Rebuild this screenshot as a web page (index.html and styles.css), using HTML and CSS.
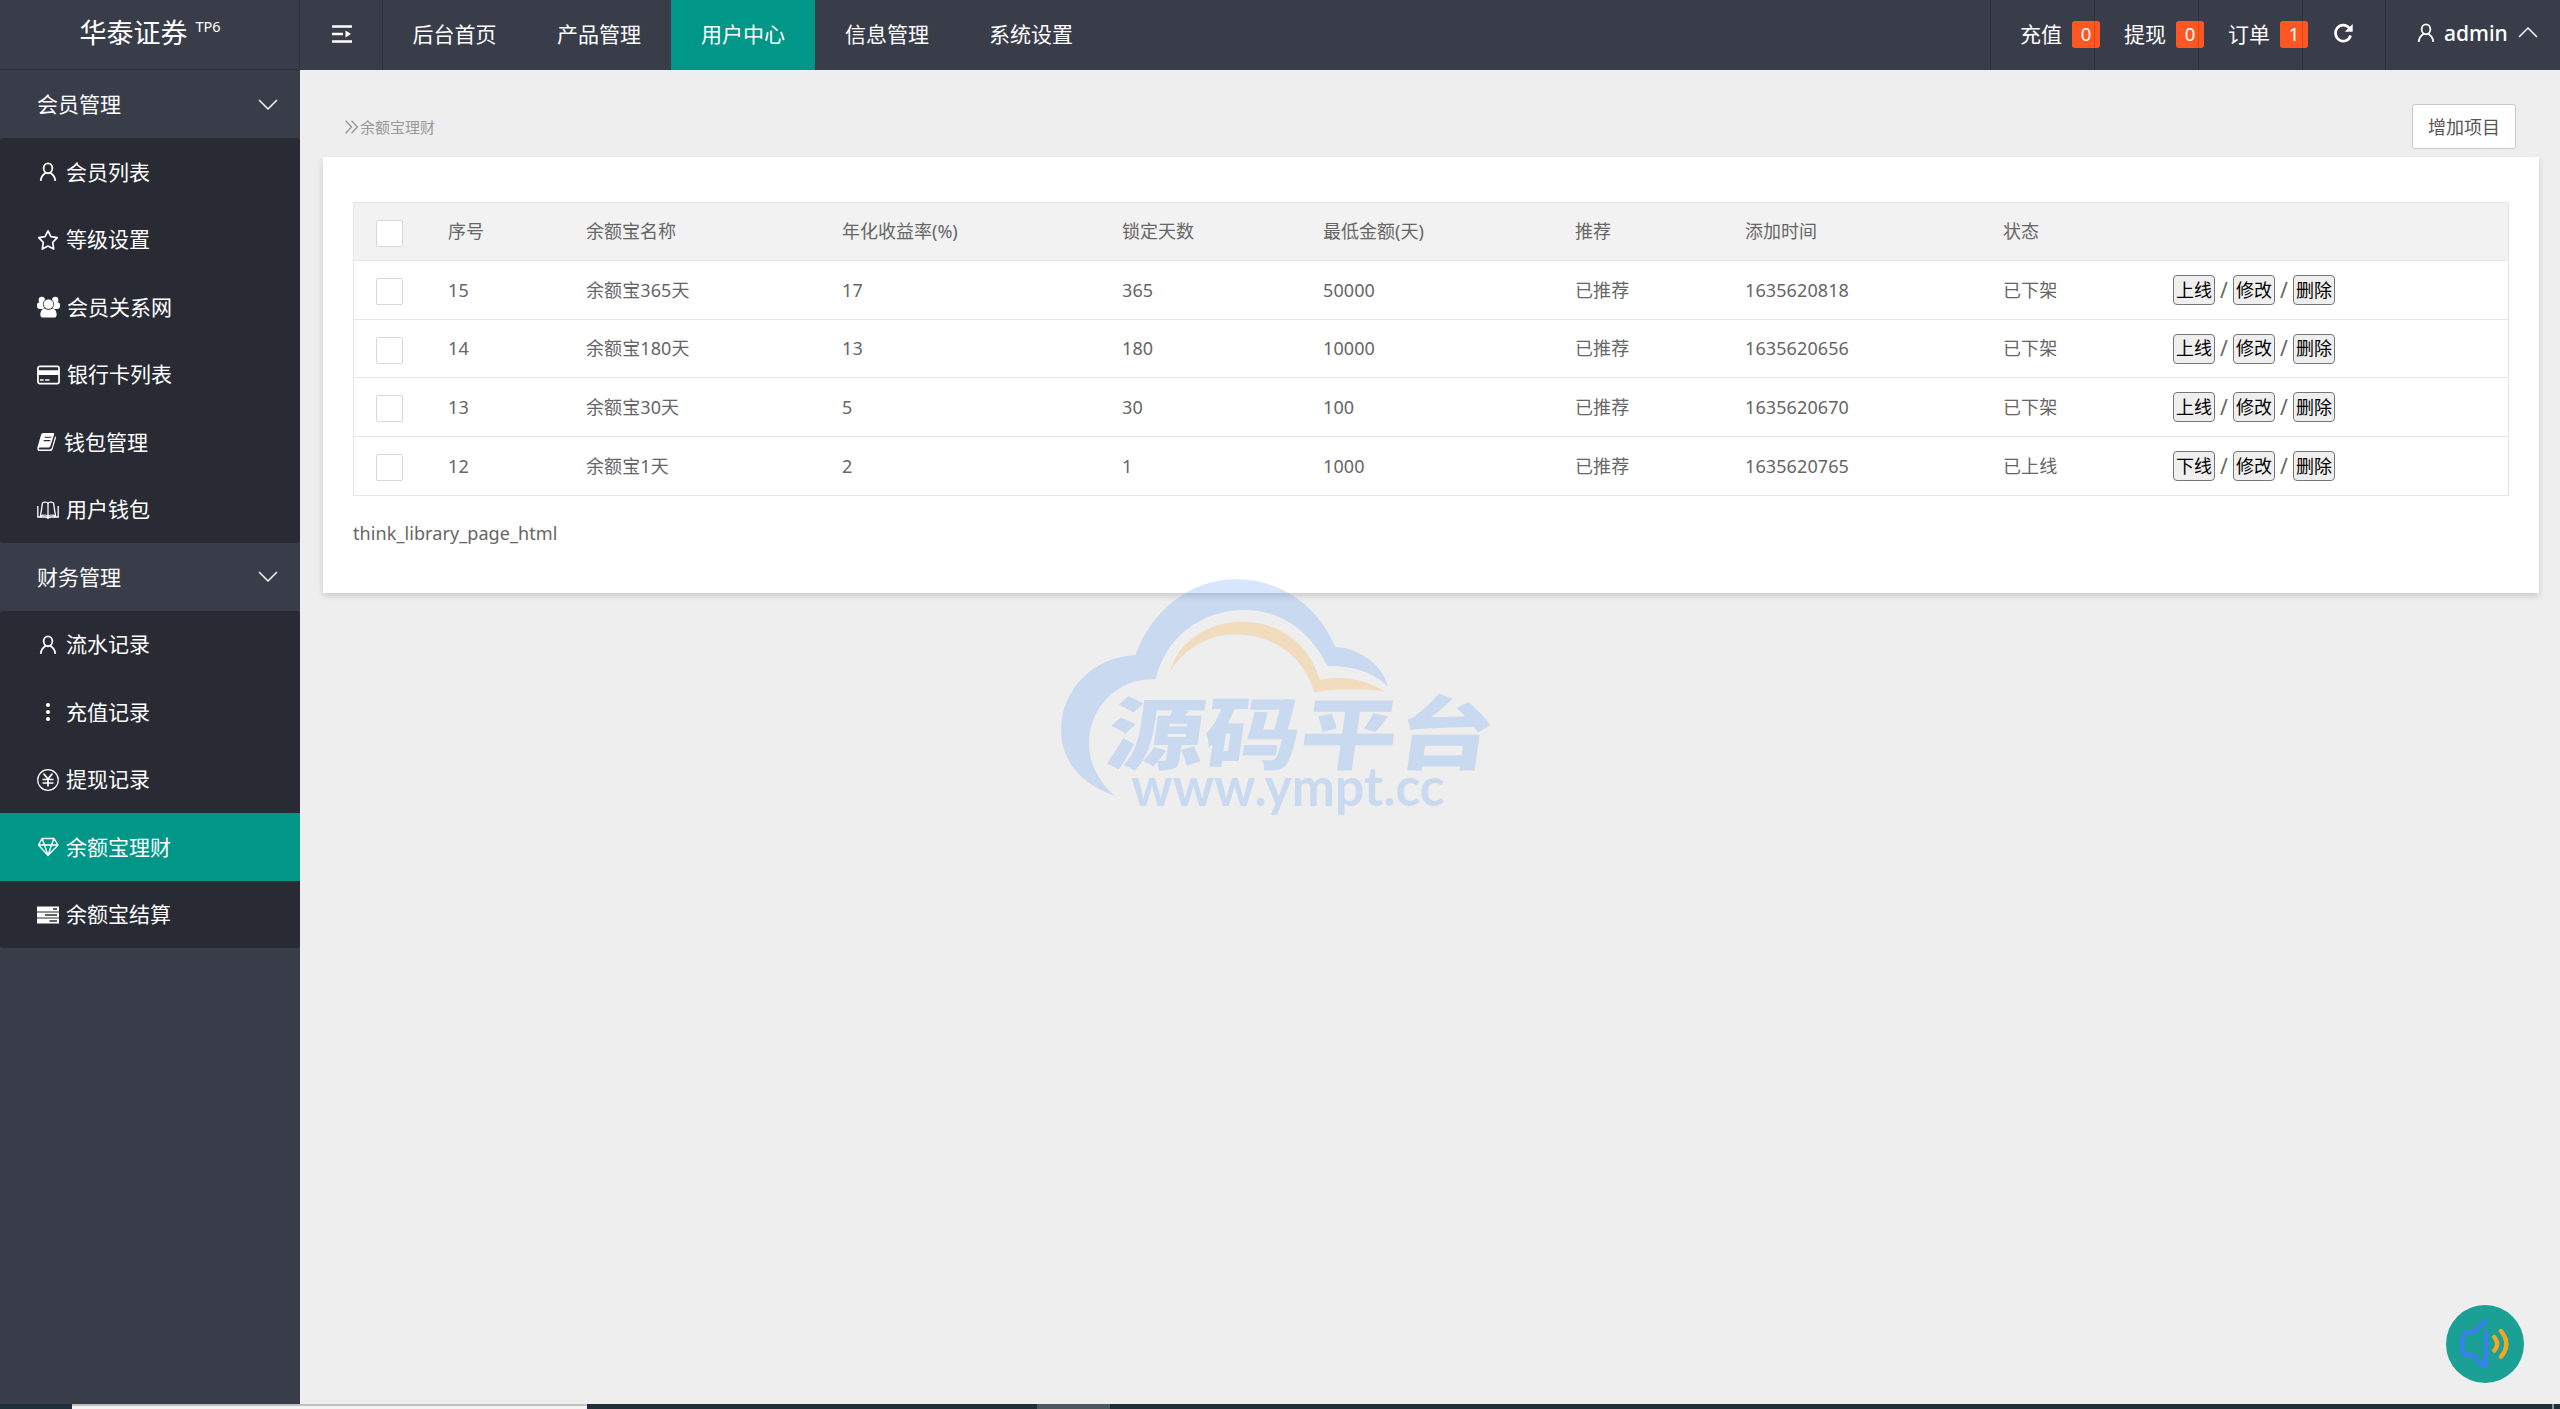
FILE: index.html
```html
<!DOCTYPE html>
<html lang="zh-CN">
<head>
<meta charset="utf-8">
<title>余额宝理财</title>
<link rel="stylesheet" href="styles.css">
</head>
<body>
<svg class="defs" aria-hidden="true">
  <symbol id="user" viewBox="0 0 22 22"><g fill="none" stroke="currentColor" stroke-width="2"><ellipse cx="11" cy="7" rx="4.800" ry="5.400"/><path d="M3 20.800c.2-4 2.400-6.900 5.600-8.900M19 20.800c-.2-4-2.400-6.900-5.600-8.900"/></g></symbol>
  <symbol id="star" viewBox="0 0 22 22"><path d="M11 1.800l2.900 5.900 6.400 1-4.600 4.600 1 6.700L11 17l-5.700 3 1-6.700L1.700 8.700l6.400-1z" fill="none" stroke="currentColor" stroke-width="1.700" stroke-linejoin="round"/></symbol>
  <symbol id="group" viewBox="0 0 24 22"><g fill="currentColor"><circle cx="5" cy="3.600" r="3.300"/><circle cx="19" cy="3.600" r="3.300"/><rect x="0" y="6" width="8" height="7" rx="3"/><rect x="16" y="6" width="8" height="7" rx="3"/><path d="M3.500 19c0-4 2-6.500 4.500-6.500 2 1.500 6 1.500 8 0 2.500 0 4.500 2.500 4.500 6.500 0 2-1 3-3 3h-11c-2 0-3-1-3-3z"/><circle cx="12" cy="8" r="5.400" stroke="#282b33" stroke-width=".8"/></g></symbol>
  <symbol id="card" viewBox="0 0 24 20"><rect x="1" y="1" width="22" height="18" rx="2" fill="none" stroke="currentColor" stroke-width="1.800"/><path d="M1 5h22v5H1zM3 14.500h4v1.500H3zM8.500 14.500H13V16H8.500z" fill="currentColor"/></symbol>
  <symbol id="book" viewBox="0 0 21 20"><path d="M6.500.5h10.500q1.500 0 1 1.500l-4 12.500q-.5 1.300-2 1.300H3.200q-1.500 0-1.500 1t1.500 1H13q2 0 2.500-1.500L19 4q1.300.5.900 1.800l-3.600 12Q15.700 19.500 14 19.500H3q-3 0-2.700-3.500l4-13.500q.5-2 2.200-2z" fill="currentColor"/><path d="M8 5h7M7 8.500h7" stroke="#282b33" stroke-width="1.200"/></symbol>
  <symbol id="openbook" viewBox="0 0 22 18"><g fill="none" stroke="currentColor" stroke-width="1.300"><path d="M11 15.500c-1.500-1.700-5-1.700-7.500-.5L5.500 2c2-1.300 4.500-1 5.500.6C12 1 14.500.7 16.500 2l2 13c-2.500-1.200-6-1.200-7.500.5zM11 2.500v13M.8 5v11H9l2 1.300L13 16h8.200V5"/></g></symbol>
  <symbol id="dots" viewBox="0 0 22 22"><g fill="currentColor"><circle cx="11" cy="4" r="2.100"/><circle cx="11" cy="11" r="2.100"/><circle cx="11" cy="18" r="2.100"/></g></symbol>
  <symbol id="yen" viewBox="0 0 22 22"><g fill="none" stroke="currentColor"><circle cx="11" cy="11" r="10.300" stroke-width="1.200"/><path d="M6.500 4.500L11 10l4.500-5.500M11 10v7.500M5.500 10.500h11M5.500 14h11" stroke-width="1.700"/></g></symbol>
  <symbol id="diamond" viewBox="0 0 22 20"><g fill="none" stroke="currentColor" stroke-width="1.400" stroke-linejoin="round"><path d="M5 1.500h12L21 8 11 18.500 1.500 8zM1.500 8H21M5 1.500L7.500 8 11 18.500 14.500 8 17 1.500"/></g></symbol>
  <symbol id="server" viewBox="0 0 22 18"><path d="M0 .5h22v5H0zM0 6.500h22v5H0zM0 12.500h22v5H0z" fill="currentColor"/><path d="M16 3h4M8 9h12M12.500 15H20" stroke="#282b33" stroke-width="1.300"/></symbol>
  <symbol id="down" viewBox="0 0 20 12"><path d="M1 1l9 9 9-9" fill="none" stroke="currentColor" stroke-width="1.500"/></symbol>
</svg>

<header class="top">
  <div class="logo"><span class="logo-name">华泰证券</span><sup class="logo-ver">TP6</sup></div>
  <div class="fold">
    <svg width="20" height="18" viewBox="0 0 20 18"><path d="M0 1.500h20M0 9h11M0 16.500h20" stroke="#fff" stroke-width="2.600"/><path d="M13.500 5.500L19 9l-5.500 3.500z" fill="#fff"/></svg>
  </div>
  <nav class="nav">
    <a>后台首页</a><a>产品管理</a><a class="on">用户中心</a><a>信息管理</a><a>系统设置</a>
  </nav>
  <div class="tools">
    <a class="tool">充值<b class="badge">0</b></a>
    <a class="tool">提现<b class="badge">0</b></a>
    <a class="tool">订单<b class="badge">1</b></a>
    <a class="tool refresh"><svg width="20" height="20" viewBox="0 0 20 20"><path d="M16.300 5.200A7.700 8 0 1 0 17.600 12.500" fill="none" stroke="#fff" stroke-width="2.700"/><path d="M19.700 1v7.800h-8z" fill="#fff"/></svg></a>
    <a class="tool account"><svg class="ico" width="22" height="20"><use href="#user"/></svg><span class="who">admin</span><svg class="up" width="20" height="12"><use href="#down"/></svg></a>
  </div>
</header>

<div class="body">
  <aside class="side">
    <div class="group-title">会员管理<svg width="20" height="12"><use href="#down"/></svg></div>
    <ul class="menu">
      <li><svg width="22" height="20"><use href="#user"/></svg>会员列表</li>
      <li><svg width="22" height="22"><use href="#star"/></svg>等级设置</li>
      <li><svg width="23" height="22"><use href="#group"/></svg>会员关系网</li>
      <li><svg width="23" height="20"><use href="#card"/></svg>银行卡列表</li>
      <li><svg width="20" height="20"><use href="#book"/></svg>钱包管理</li>
      <li><svg width="22" height="18"><use href="#openbook"/></svg>用户钱包</li>
    </ul>
    <div class="group-title">财务管理<svg width="20" height="12"><use href="#down"/></svg></div>
    <ul class="menu">
      <li><svg width="22" height="20"><use href="#user"/></svg>流水记录</li>
      <li><svg width="22" height="22"><use href="#dots"/></svg>充值记录</li>
      <li><svg width="22" height="22"><use href="#yen"/></svg>提现记录</li>
      <li class="on"><svg width="22" height="20"><use href="#diamond"/></svg>余额宝理财</li>
      <li><svg width="22" height="18"><use href="#server"/></svg>余额宝结算</li>
    </ul>
  </aside>

  <main class="main">
    <div class="crumbs">
      <span class="crumb"><svg width="13" height="14" viewBox="0 0 13 14"><path d="M.7.700L6.500 7 .7 13.300M6.500.700L12.300 7l-5.800 6.300" fill="none" stroke="#999" stroke-width="1.400"/></svg>余额宝理财</span>
      <button class="add">增加项目</button>
    </div>
    <section class="card">
      <table class="list">
        <colgroup><col class="c0"><col class="c1"><col class="c2"><col class="c3"><col class="c4"><col class="c5"><col class="c6"><col class="c7"><col class="c8"><col></colgroup>
        <thead>
          <tr><th><i class="check"></i></th><th>序号</th><th>余额宝名称</th><th>年化收益率(%)</th><th>锁定天数</th><th>最低金额(天)</th><th>推荐</th><th>添加时间</th><th>状态</th><th></th></tr>
        </thead>
        <tbody>
          <tr class="tall"><td><i class="check"></i></td><td>15</td><td>余额宝365天</td><td>17</td><td>365</td><td>50000</td><td>已推荐</td><td>1635620818</td><td>已下架</td><td><div class="ops"><button>上线</button><span>/</span><button>修改</button><span>/</span><button>删除</button></div></td></tr>
          <tr><td><i class="check"></i></td><td>14</td><td>余额宝180天</td><td>13</td><td>180</td><td>10000</td><td>已推荐</td><td>1635620656</td><td>已下架</td><td><div class="ops"><button>上线</button><span>/</span><button>修改</button><span>/</span><button>删除</button></div></td></tr>
          <tr class="tall"><td><i class="check"></i></td><td>13</td><td>余额宝30天</td><td>5</td><td>30</td><td>100</td><td>已推荐</td><td>1635620670</td><td>已下架</td><td><div class="ops"><button>上线</button><span>/</span><button>修改</button><span>/</span><button>删除</button></div></td></tr>
          <tr class="tall"><td><i class="check"></i></td><td>12</td><td>余额宝1天</td><td>2</td><td>1</td><td>1000</td><td>已推荐</td><td>1635620765</td><td>已上线</td><td><div class="ops"><button>下线</button><span>/</span><button>修改</button><span>/</span><button>删除</button></div></td></tr>
        </tbody>
      </table>
      <p class="pager">think_library_page_html</p>
    </section>
  </main>
</div>

<footer class="taskbar"><span class="task active"></span><span class="task"></span><span class="peek"></span></footer>

<svg class="watermark" viewBox="0 0 1440 840" width="480" height="280">
  <g fill="#3c87fa">
    <path d="M224 707C120 672 63 600 63 508C66 385 160 292 287 285C335 150 450 58 590 58C725 58 835 140 886 261C965 266 1030 320 1044 381C1005 337 935 317 862 318C810 210 720 150 614 150C480 150 375 235 347 358C235 352 148 440 147 550C148 610 175 665 224 707Z"/>
    <path d="M389 335C415 245 505 185 605 185C720 185 805 250 840 359C910 346 975 357 1034 395C960 384 890 387 823 397C790 285 695 223 585 223C505 223 435 265 389 335Z" fill="#fd9605"/>
    <text class="wm-name" transform="translate(192 609) skewX(-8) scale(1.180 .96)" textLength="982" lengthAdjust="spacing">源码平台</text>
    <text class="wm-url" x="274" y="739" textLength="940" lengthAdjust="spacingAndGlyphs">www.ympt.cc</text>
  </g>
</svg>

<div class="sound">
  <svg width="50" height="50" viewBox="0 0 150 150" fill="none" stroke-linecap="round" stroke-linejoin="round">
    <path d="M76 8L38 40H18Q8 40 7 75T18 108H38L66 138Q78 146 78 132V40" stroke="#3c7ff0" stroke-width="13"/>
    <path d="M103 54Q120 75 103 95M123 36Q155 75 123 113" stroke="#f5a623" stroke-width="13"/>
  </svg>
</div>
</body>
</html>
```
FILE: styles.css
```css
* { box-sizing: border-box; }
body {
  margin: 0;
  width: 2560px;
  height: 1409px;
  overflow: hidden;
  display: flex;
  flex-direction: column;
  background: #eee;
  color: #666;
  font: 18px/27px "Noto Sans", "Noto Sans CJK SC", sans-serif;
}
.defs { position: absolute; width: 0; height: 0; }
button { font: inherit; margin: 0; }

.top {
  flex: none;
  display: flex;
  height: 70px;
  background: #393d49;
  color: #fff;
  font-size: 21px;
}
.logo {
  width: 300px;
  display: flex;
  justify-content: center;
  padding: 13px 15px 0 16px;
  border-right: 1px solid #30333d;
  border-bottom: 1px solid #30333d;
}
.logo-name { font-size: 27px; line-height: 40px; }
.logo-ver { margin-left: 8px; font-size: 14.5px; line-height: 27px; }
.fold {
  width: 83px;
  padding: 25px 0 0 32px;
  line-height: 0;
  border-right: 1px solid #30333d;
}
.nav { display: flex; margin-left: -1px; }
.nav a { width: 144px; line-height: 68px; text-align: center; }
.nav a:first-child { width: 145px; }
.nav .on { background: #009688; }
.tools { display: flex; margin-left: auto; }
.tool {
  position: relative;
  width: 104px;
  padding-left: 30px;
  display: flex;
  line-height: 68px;
  white-space: nowrap;
}
.tool::before {
  content: "";
  position: absolute;
  z-index: 1;
  left: 0;
  top: 0;
  width: 1px;
  height: 70px;
  background: rgba(0, 0, 0, .17);
}
.badge {
  flex: none;
  width: 28px;
  height: 27px;
  margin: 21px 0 0 10px;
  border-radius: 3px;
  background: #ff5722;
  font-size: 18.5px;
  font-weight: 400;
  line-height: 26px;
  text-align: center;
}
.refresh { width: 83px; padding: 23px 0 0 31px; }
.account { width: 175px; padding-left: 30px; }
.account .ico { margin-top: 23px; }
.who { margin-left: 7px; font-weight: 500; line-height: 67px; }
.up { margin: 26px 0 0 10px; transform: rotate(180deg); }

.body { flex: 1; display: flex; min-height: 0; }
.side {
  flex: none;
  width: 300px;
  background: #393d49;
  color: #fff;
  font-size: 21px;
}
.group-title {
  display: flex;
  align-items: center;
  justify-content: space-between;
  height: 67.5px;
  padding: 1px 22px 0 37px;
}
.side > .group-title:first-child { height: 68px; }
.menu {
  margin: 0;
  padding: 0;
  list-style: none;
  background: #282b33;
  border-radius: 3px;
}
.menu li {
  display: flex;
  align-items: center;
  gap: 7px;
  height: 67.5px;
  padding: 1px 0 0 37px;
}
.menu .on { background: #009688; }

.main { flex: 1; padding: 34px 21px 0 23px; }
.crumbs {
  display: flex;
  justify-content: space-between;
  height: 53px;
  padding: 0 23px 0 22px;
}
.crumb {
  display: flex;
  align-items: center;
  height: 46px;
  gap: 2px;
  color: #999;
  font-size: 15px;
}
.add {
  width: 104px;
  height: 45px;
  padding: 2px 0 0;
  border: 1px solid #c9c9c9;
  border-radius: 3px;
  background: #fff;
  color: #555;
}
.card {
  height: 436px;
  padding: 45px 30px 0;
  background: #fff;
  box-shadow: 0 3px 6px rgba(0, 0, 0, .15);
}
.list {
  width: 2156px;
  table-layout: fixed;
  border-collapse: separate;
  border-spacing: 0;
  border: 1px solid #e6e6e6;
  border-bottom: 0;
}
.c0 { width: 72px; }
.c1 { width: 138px; }
.c2 { width: 256px; }
.c3 { width: 280px; }
.c4 { width: 201px; }
.c5 { width: 252px; }
.c6 { width: 170px; }
.c7 { width: 258px; }
.c8 { width: 170px; }
.list th, .list td {
  height: 58px;
  padding: 0 0 0 22px;
  border-bottom: 1px solid #e6e6e6;
  font-weight: 400;
  text-align: left;
}
.list td { letter-spacing: .1px; }
.list .tall td { height: 59px; }
.list th { background: #f2f2f2; }
.check {
  display: block;
  width: 27px;
  height: 27px;
  margin-top: 3px;
  border: 1px solid #d8d8d8;
  border-radius: 2px;
  background: #fff;
}
.ops { display: flex; align-items: center; letter-spacing: 0; }
.ops span { width: 18px; font-size: 21px; text-align: center; }
.ops button {
  flex: none;
  width: 42px;
  height: 30px;
  padding: 0;
  border: 1px solid #767676;
  border-radius: 4px;
  background: #efefef;
  color: #000;
  line-height: 27px;
}
.pager { margin: 24px 0 0; letter-spacing: .08px; }

.taskbar {
  flex: none;
  display: flex;
  height: 5px;
  background: #1e2f38;
}
.task { width: 73px; margin-left: 450px; background: #4c5a60; }
.task.active {
  width: 515px;
  margin-left: 72px;
  background: #f3f3f3;
  border-top: 2px solid #c0c0c0;
}
.peek { width: 2px; margin: 0 6px 0 auto; background: #87929a; }

.watermark { position: absolute; left: 1040px; top: 560px; opacity: .2; }
.wm-name { font: 900 246px "Noto Sans CJK SC", sans-serif; }
.wm-url { font: 700 158px Lato, sans-serif; }

.sound {
  position: absolute;
  left: 2446px;
  top: 1305px;
  width: 78px;
  height: 78px;
  padding: 14px;
  border-radius: 50%;
  background: #1aa094;
}
```
